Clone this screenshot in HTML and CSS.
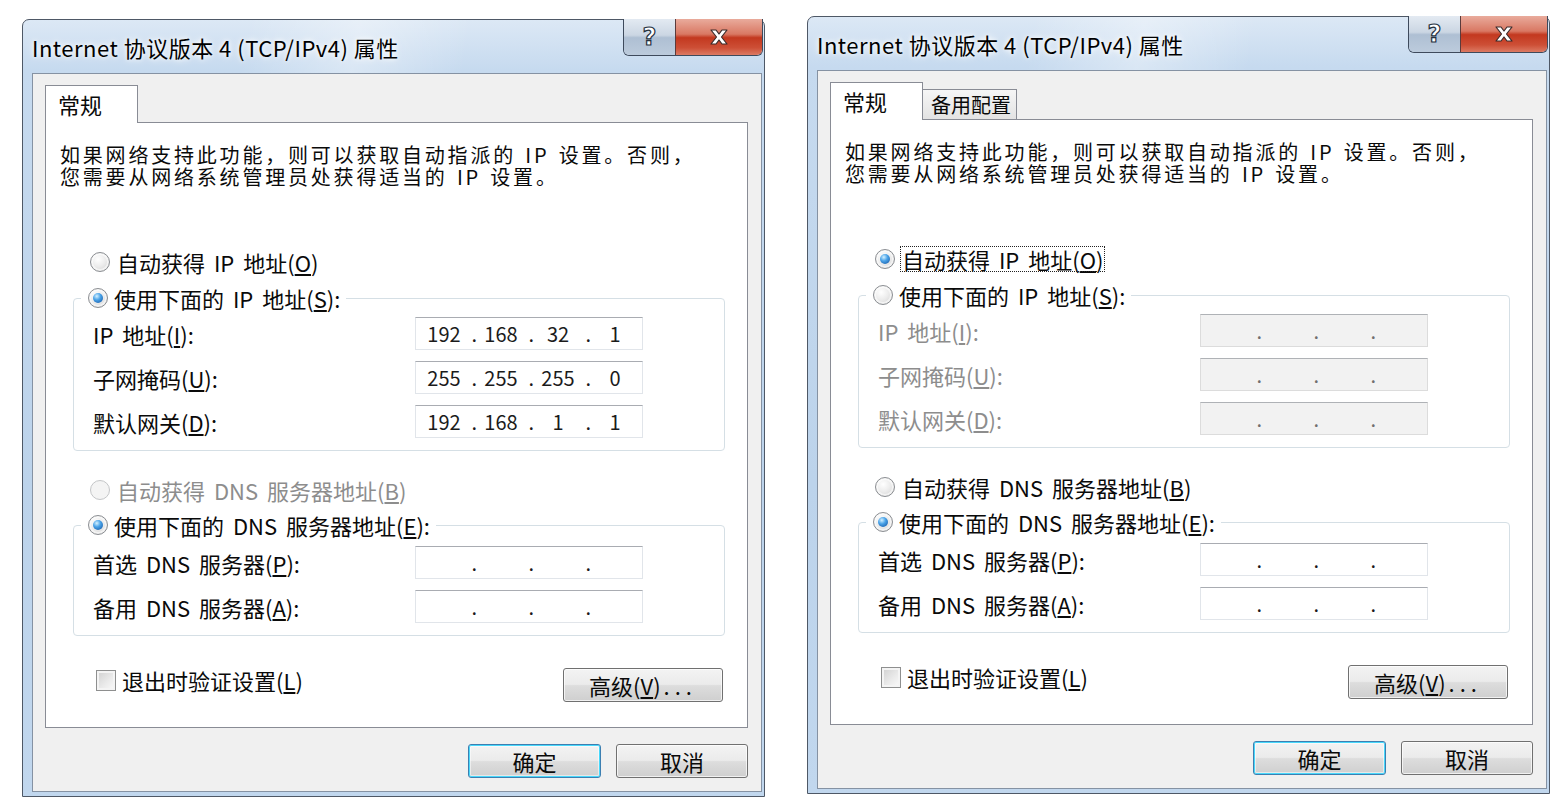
FILE: index.html
```html
<!DOCTYPE html>
<html>
<head>
    <meta charset="utf-8">
    <link rel="stylesheet" href="styles.css">
</head>
<body>
    <div class="desk">
        <!-- static configuration -->
        <div class="window">
            <div class="titleBar">
                <span class="caption">Internet 协议版本 4 (TCP/IPv4) 属性</span>
                <div class="capButtons">
                    <span class="capHelp">?</span>
                    <span class="capClose"><svg width="22" height="18" viewBox="0 0 22 18"><path d="M3 2h5l3 4 3-4h5l-5.5 7 5.5 7h-5l-3-4-3 4H3l5.5-7z" fill="#fff" stroke="#3b2b2b" stroke-width="1.2" stroke-linejoin="round"/></svg></span>
                </div>
            </div>
            <div class="client">
                <div class="tabs">
                    <span class="tab">常规</span>
                </div>
                <div class="panel">
                    <p class="desc">如果网络支持此功能，则可以获取自动指派的 IP 设置。否则，<br>您需要从网络系统管理员处获得适当的 IP 设置。</p>
                    <div class="opt first"><span class="radio"></span><span>自动获得 IP 地址(<u>O</u>)</span></div>
                    <fieldset class="group">
                        <legend><span class="radio on"></span><span>使用下面的 IP 地址(<u>S</u>):</span></legend>
                        <div class="rows">
                            <div class="row">
                                <span>IP 地址(<u>I</u>):</span>
                                <div class="ip"><span class="oct">192</span><span class="dot">.</span><span class="oct">168</span><span class="dot">.</span><span class="oct">32</span><span class="dot">.</span><span class="oct">1</span></div>
                            </div>
                            <div class="row">
                                <span>子网掩码(<u>U</u>):</span>
                                <div class="ip"><span class="oct">255</span><span class="dot">.</span><span class="oct">255</span><span class="dot">.</span><span class="oct">255</span><span class="dot">.</span><span class="oct">0</span></div>
                            </div>
                            <div class="row">
                                <span>默认网关(<u>D</u>):</span>
                                <div class="ip"><span class="oct">192</span><span class="dot">.</span><span class="oct">168</span><span class="dot">.</span><span class="oct">1</span><span class="dot">.</span><span class="oct">1</span></div>
                            </div>
                        </div>
                    </fieldset>
                    <div class="opt dns disabled"><span class="radio"></span><span>自动获得 DNS 服务器地址(<u>B</u>)</span></div>
                    <fieldset class="group dnsGroup">
                        <legend><span class="radio on"></span><span>使用下面的 DNS 服务器地址(<u>E</u>):</span></legend>
                        <div class="rows">
                            <div class="row">
                                <span>首选 DNS 服务器(<u>P</u>):</span>
                                <div class="ip"><span class="oct"></span><span class="dot">.</span><span class="oct"></span><span class="dot">.</span><span class="oct"></span><span class="dot">.</span><span class="oct"></span></div>
                            </div>
                            <div class="row">
                                <span>备用 DNS 服务器(<u>A</u>):</span>
                                <div class="ip"><span class="oct"></span><span class="dot">.</span><span class="oct"></span><span class="dot">.</span><span class="oct"></span><span class="dot">.</span><span class="oct"></span></div>
                            </div>
                        </div>
                    </fieldset>
                    <div class="checkRow">
                        <span class="check"><span class="box"></span><span>退出时验证设置(<u>L</u>)</span></span>
                        <button class="btn advanced">高级(<u>V</u>)<span class="dots">...</span></button>
                    </div>
                </div>
                <div class="footer">
                    <button class="btn ok">确定</button>
                    <button class="btn cancel">取消</button>
                </div>
            </div>
        </div>

        <!-- automatic configuration -->
        <div class="window second">
            <div class="titleBar">
                <span class="caption">Internet 协议版本 4 (TCP/IPv4) 属性</span>
                <div class="capButtons">
                    <span class="capHelp">?</span>
                    <span class="capClose"><svg width="22" height="18" viewBox="0 0 22 18"><path d="M3 2h5l3 4 3-4h5l-5.5 7 5.5 7h-5l-3-4-3 4H3l5.5-7z" fill="#fff" stroke="#3b2b2b" stroke-width="1.2" stroke-linejoin="round"/></svg></span>
                </div>
            </div>
            <div class="client">
                <div class="tabs">
                    <span class="tab">常规</span>
                    <span class="tab back">备用配置</span>
                </div>
                <div class="panel">
                    <p class="desc">如果网络支持此功能，则可以获取自动指派的 IP 设置。否则，<br>您需要从网络系统管理员处获得适当的 IP 设置。</p>
                    <div class="opt first"><span class="radio on"></span><span class="focus">自动获得 IP 地址(<u>O</u>)</span></div>
                    <fieldset class="group">
                        <legend><span class="radio"></span><span>使用下面的 IP 地址(<u>S</u>):</span></legend>
                        <div class="rows off">
                            <div class="row">
                                <span>IP 地址(<u>I</u>):</span>
                                <div class="ip"><span class="oct"></span><span class="dot">.</span><span class="oct"></span><span class="dot">.</span><span class="oct"></span><span class="dot">.</span><span class="oct"></span></div>
                            </div>
                            <div class="row">
                                <span>子网掩码(<u>U</u>):</span>
                                <div class="ip"><span class="oct"></span><span class="dot">.</span><span class="oct"></span><span class="dot">.</span><span class="oct"></span><span class="dot">.</span><span class="oct"></span></div>
                            </div>
                            <div class="row">
                                <span>默认网关(<u>D</u>):</span>
                                <div class="ip"><span class="oct"></span><span class="dot">.</span><span class="oct"></span><span class="dot">.</span><span class="oct"></span><span class="dot">.</span><span class="oct"></span></div>
                            </div>
                        </div>
                    </fieldset>
                    <div class="opt dns"><span class="radio"></span><span>自动获得 DNS 服务器地址(<u>B</u>)</span></div>
                    <fieldset class="group dnsGroup">
                        <legend><span class="radio on"></span><span>使用下面的 DNS 服务器地址(<u>E</u>):</span></legend>
                        <div class="rows">
                            <div class="row">
                                <span>首选 DNS 服务器(<u>P</u>):</span>
                                <div class="ip"><span class="oct"></span><span class="dot">.</span><span class="oct"></span><span class="dot">.</span><span class="oct"></span><span class="dot">.</span><span class="oct"></span></div>
                            </div>
                            <div class="row">
                                <span>备用 DNS 服务器(<u>A</u>):</span>
                                <div class="ip"><span class="oct"></span><span class="dot">.</span><span class="oct"></span><span class="dot">.</span><span class="oct"></span><span class="dot">.</span><span class="oct"></span></div>
                            </div>
                        </div>
                    </fieldset>
                    <div class="checkRow">
                        <span class="check"><span class="box"></span><span>退出时验证设置(<u>L</u>)</span></span>
                        <button class="btn advanced">高级(<u>V</u>)<span class="dots">...</span></button>
                    </div>
                </div>
                <div class="footer">
                    <button class="btn ok">确定</button>
                    <button class="btn cancel">取消</button>
                </div>
            </div>
        </div>
    </div>
</body>
</html>
```

FILE: styles.css
```css
body {
    margin: 0px;
    padding: 0px;
    background: #fff;
    font-family: "Noto Sans CJK SC", sans-serif;
    color: #0a0a0a;
}

.desk {
    display: flex;
    align-items: flex-start;
    gap: 42px;
    padding: 19px 0 0 22px;
}

/* aero frame */
.window {
    width: 743px;
    height: 778px;
    box-sizing: border-box;
    border: 1px solid #4e5866;
    border-radius: 7px 7px 0 0;
    background: linear-gradient(to bottom, #dce8f5 0px, #c6daef 50px, #bcd3eb 60%, #c1d7ee 100%);
    display: flex;
    flex-direction: column;
}

.window.second {
    margin-top: -3px;
}

.titleBar {
    display: flex;
    height: 53px;
    background: linear-gradient(100deg, rgba(255, 255, 255, 0) 30%, rgba(255, 255, 255, 0.35) 45%, rgba(255, 255, 255, 0) 60%);
}

.caption {
    flex: 1;
    align-self: center;
    padding-left: 9px;
    font-size: 22px;
    letter-spacing: 0.5px;
    color: #000;
    text-shadow: 0 0 8px #fff, 0 0 4px #fff;
}

.capButtons {
    display: flex;
    height: 36px;
    margin-top: -1px;
    margin-right: 1px;
    border: 1px solid #3e4a5c;
    border-top: none;
    border-radius: 0 0 6px 6px;
    overflow: hidden;
}

.capHelp {
    width: 51px;
    display: flex;
    align-items: center;
    justify-content: center;
    background: linear-gradient(to bottom, #e3eaf2 0%, #cbd6e3 45%, #aebfd3 52%, #bccbdc 100%);
    font-family: "DejaVu Sans", sans-serif;
    font-weight: bold;
    font-size: 24px;
    color: #fff;
    -webkit-text-stroke: 1.2px #26313f;
}

.capClose {
    width: 86px;
    display: flex;
    align-items: center;
    justify-content: center;
    border-left: 1px solid #5b3b3b;
    background: linear-gradient(to bottom, #e9ab9c 0%, #d97863 42%, #c3381f 52%, #cd4f36 80%, #dc7a63 100%);
}

/* client area */
.client {
    flex: 1;
    margin: 0 2px 4px 9px;
    border: 1px solid #8592a3;
    background: #f0f0f0;
    padding: 11px 13px 0 12px;
    display: flex;
    flex-direction: column;
}

.tabs {
    display: flex;
    align-items: flex-end;
    height: 38px;
    margin-bottom: -1px;
    position: relative;
    z-index: 1;
}

.tab {
    box-sizing: border-box;
    width: 93px;
    height: 38px;
    padding-left: 12px;
    border: 1px solid #898c95;
    border-bottom: none;
    background: #fff;
    font-size: 22px;
    line-height: 36px;
    white-space: nowrap;
}

.tab.back {
    width: 94px;
    height: 31px;
    padding-left: 8px;
    border-left: none;
    border-bottom: 1px solid #898c95;
    background: linear-gradient(to bottom, #f6f6f6, #e3e3e3);
    font-size: 20px;
    line-height: 30px;
}

.panel {
    box-sizing: border-box;
    height: 606px;
    border: 1px solid #898c95;
    background: #fff;
    display: flex;
    flex-direction: column;
    font-size: 22px;
    word-spacing: 4px;
}

.desc {
    margin: 21px 0 0 14px;
    font-size: 20px;
    line-height: 22px;
    letter-spacing: 2.8px;
    word-spacing: 2px;
}

.opt {
    display: flex;
    align-items: center;
    gap: 7px;
    height: 24px;
    margin-left: 44px;
}

.opt.first {
    margin-top: 62px;
}

.opt.dns {
    margin-top: 27px;
}

.disabled, .off {
    color: #8d8d8d;
}

.focus {
    outline: 1px dotted #222;
    outline-offset: 1px;
    line-height: 22px;
}

/* radio & check glyphs */
.radio {
    box-sizing: border-box;
    width: 20px;
    height: 20px;
    border: 1px solid #8b8e92;
    border-radius: 50%;
    background: radial-gradient(circle at 40% 35%, #ffffff 0%, #ececec 45%, #cdcdcd 100%);
    box-shadow: inset 0 0 0 2px rgba(255, 255, 255, 0.6);
    display: flex;
    align-items: center;
    justify-content: center;
    flex: none;
}

.radio.on::after {
    content: "";
    width: 10px;
    height: 10px;
    border-radius: 50%;
    background: radial-gradient(circle at 38% 32%, #d4f1ff 0%, #4aa3e8 40%, #0f4f9e 100%);
}

.disabled .radio {
    border-color: #c4c6c8;
    background: #f4f4f4;
    box-shadow: none;
}

.check {
    display: flex;
    align-items: center;
    gap: 6px;
    height: 24px;
}

.box {
    box-sizing: border-box;
    width: 20px;
    height: 21px;
    border: 1px solid #8e8f8f;
    background: linear-gradient(135deg, #cfcfcf 0%, #e9e9e9 55%, #fbfbfb 100%);
    box-shadow: inset 0 0 0 2px #f4f4f4;
}

/* group boxes */
.group {
    margin: 12px 22px 0 27px;
    padding: 7px 81px 12px 19px;
    border: 1px solid #d5dfe5;
    border-radius: 4px;
}

.group.dnsGroup {
    margin-top: 11px;
    padding-top: 9px;
}

.group legend {
    display: flex;
    align-items: center;
    gap: 6px;
    height: 24px;
    margin-left: -12px;
    padding: 0 6px 0 7px;
    color: #0a0a0a;
}

.rows {
    display: flex;
    flex-direction: column;
    gap: 11px;
}

.row {
    display: flex;
    align-items: center;
    justify-content: space-between;
    height: 33px;
}

.ip {
    box-sizing: border-box;
    display: flex;
    align-items: center;
    width: 228px;
    height: 33px;
    padding: 0 3px 0 4px;
    border: 1px solid #e1e5ea;
    border-top-color: #a9acb2;
    background: #fff;
    font-size: 20px;
    color: #1b1b1b;
    word-spacing: 0;
}

.ip .oct {
    width: 48px;
    text-align: center;
}

.ip .dot {
    width: 9px;
    text-align: right;
}

.off .ip {
    background: #f2f2f2;
    border-color: #dcdcdc;
    border-top-color: #afb2b6;
    color: #6f6f6f;
}

.checkRow {
    display: flex;
    justify-content: space-between;
    align-items: flex-start;
    margin: 32px 24px 0 50px;
}

/* push buttons */
.btn {
    box-sizing: border-box;
    height: 34px;
    border: 1px solid #707070;
    border-radius: 3px;
    background: linear-gradient(to bottom, #f3f3f3 0%, #ebebeb 48%, #dddddd 52%, #cfcfcf 100%);
    box-shadow: inset 0 0 0 1px rgba(255, 255, 255, 0.7);
    font-family: "Noto Sans CJK SC", sans-serif;
    font-size: 22px;
    color: #0a0a0a;
    padding: 0;
    line-height: 28px;
}

.btn.advanced {
    width: 160px;
}

.btn .dots {
    letter-spacing: 5px;
    margin-left: 3px;
}

.footer {
    display: flex;
    justify-content: flex-end;
    gap: 15px;
    margin-top: 16px;
}

.btn.ok {
    width: 133px;
    border-color: #3c7fb1;
    box-shadow: inset 0 0 0 1px #48d8fb, inset 0 0 0 2px rgba(255, 255, 255, 0.5);
}

.btn.cancel {
    width: 132px;
}
```
